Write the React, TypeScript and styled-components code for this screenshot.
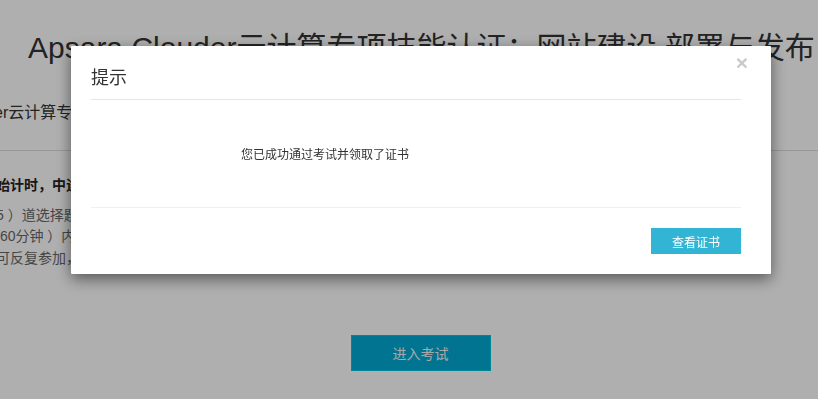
import React from "react";
import styled, { createGlobalStyle } from "styled-components";

const GlobalStyle = createGlobalStyle`
  html, body {
    margin: 0;
    padding: 0;
    background: #fff;
    overflow: hidden;
  }
  body {
    font-family: "Liberation Sans", "Noto Sans CJK SC", sans-serif;
    color: #333;
  }
`;

const Page = styled.div`
  width: 818px;
  height: 399px;
  overflow: hidden;
`;

const Title = styled.h1`
  margin: 0;
  padding: 30px 0 0 28px;
  font-size: 30px;
  font-weight: normal;
  line-height: 36px;
  white-space: nowrap;
  color: #333;
`;

const SubTitle = styled.div`
  margin: 0 0 0 -6px;
  padding-top: 36px;
  height: 48px;
  font-size: 16px;
  line-height: 22px;
  white-space: nowrap;
  border-bottom: 1px solid #ddd;
`;

const Rules = styled.div`
  margin-left: -4px;
  padding-top: 24px;
  font-size: 14px;
  white-space: nowrap;
`;

const RuleLine = styled.p<{ $strong?: boolean }>`
  margin: 0 0 ${(p) => (p.$strong ? "8px" : "0")};
  line-height: 21.5px;
  font-weight: ${(p) => (p.$strong ? "bold" : "normal")};
  color: ${(p) => (p.$strong ? "#222" : "#666")};
`;

const EnterRow = styled.div`
  display: flex;
  justify-content: center;
  padding-top: 66px;
  padding-left: 23px;
`;

const EnterButton = styled.button`
  width: 140px;
  height: 36px;
  border: 1px solid #00c3d9;
  background: #00aad2;
  color: #f5f5f5;
  font-family: inherit;
  font-size: 14px;
`;

const Backdrop = styled.div`
  position: fixed;
  inset: 0;
  background: rgba(0, 0, 0, 0.314);
`;

const Dialog = styled.div`
  position: fixed;
  left: 71px;
  top: 46px;
  width: 700px;
  background: #fff;
  box-shadow: 0 5px 15px rgba(0, 0, 0, 0.5);
  border-radius: 1px;
`;

const Header = styled.div`
  position: relative;
  margin: 0 30px 0 20px;
  padding: 20px 0 8px;
  border-bottom: 1px solid #e5e5e5;
`;

const HeaderTitle = styled.h4`
  margin: 0;
  font-size: 18px;
  font-weight: normal;
  line-height: 25px;
  color: #333;
`;

const Close = styled.button`
  position: absolute;
  right: -7px;
  top: 6px;
  border: 0;
  background: none;
  padding: 0;
  font-family: "Liberation Sans", sans-serif;
  font-size: 21px;
  font-weight: bold;
  line-height: 1;
  color: #c9c9c9;
`;

const Body = styled.div`
  display: flex;
  align-items: center;
  height: 107px;
  margin: 0 30px 0 20px;
  padding-left: 150px;
  font-size: 12px;
  color: #333;
`;

const Footer = styled.div`
  display: flex;
  justify-content: flex-end;
  margin: 0 30px 0 20px;
  padding: 20px 0;
  border-top: 1px solid #f0f0f0;
`;

const ViewButton = styled.button`
  width: 90px;
  height: 26px;
  border: 0;
  background: #32b5d5;
  color: #fff;
  font-family: inherit;
  font-size: 12px;
  padding: 0;
`;

export default function App() {
  return (
    <>
      <GlobalStyle />
      <Page>
        <Title>Apsara Clouder云计算专项技能认证：网站建设 部署与发布</Title>
        <SubTitle>er云计算专项技能认证：网站建设:部署与发布</SubTitle>
        <Rules>
          <RuleLine $strong>始计时，中途退出考试将不再计时</RuleLine>
          <RuleLine>5 ）道选择题，满分100分</RuleLine>
          <RuleLine>&nbsp;60分钟 ）内完成考试</RuleLine>
          <RuleLine>可反复参加，通过后可领取证书</RuleLine>
        </Rules>
        <EnterRow>
          <EnterButton>进入考试</EnterButton>
        </EnterRow>
      </Page>
      <Backdrop />
      <Dialog>
        <Header>
          <HeaderTitle>提示</HeaderTitle>
          <Close aria-label="关闭">×</Close>
        </Header>
        <Body>您已成功通过考试并领取了证书</Body>
        <Footer>
          <ViewButton>查看证书</ViewButton>
        </Footer>
      </Dialog>
    </>
  );
}
